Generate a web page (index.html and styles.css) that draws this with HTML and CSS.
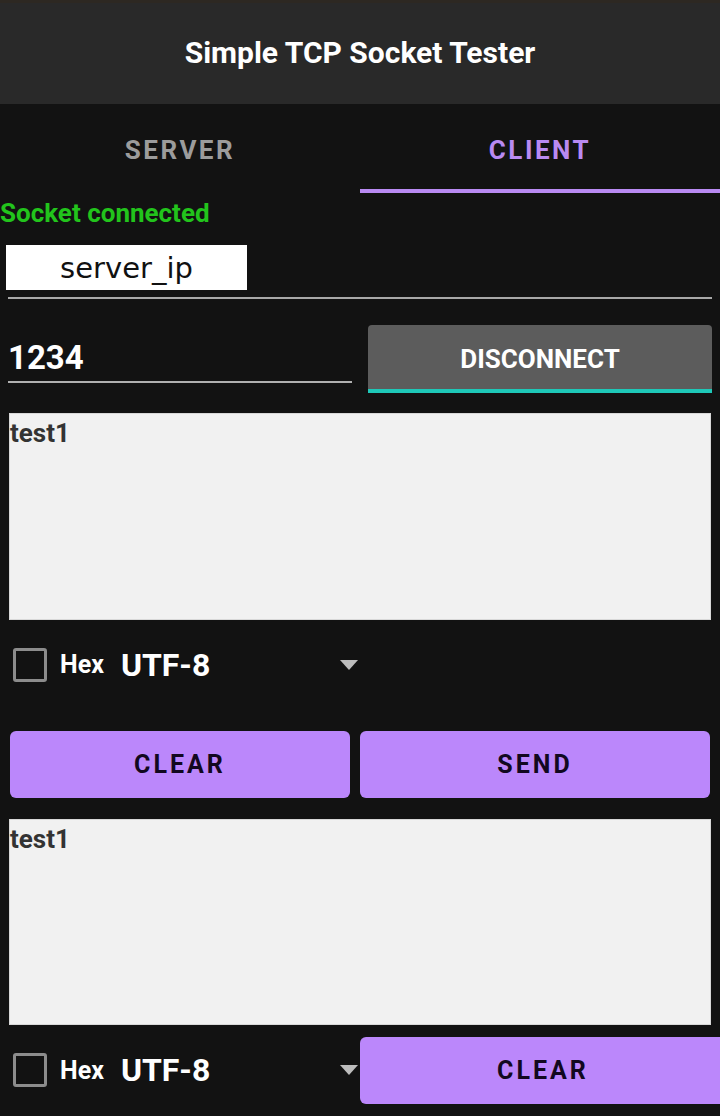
FILE: index.html
```html
<!DOCTYPE html>
<html>
<head>
<meta charset="utf-8">
<link rel="stylesheet" href="styles.css">
</head>
<body>
<div class="app">
  <header class="appbar"><h1 class="title">Simple TCP Socket Tester</h1></header>
  <nav class="tabs">
    <div class="tab">SERVER</div>
    <div class="tab active">CLIENT</div>
  </nav>
  <main class="content">
    <div class="status">Socket connected</div>
    <div class="ipbox">server_ip</div>
    <div class="divider"></div>
    <div class="port-row">
      <div class="port-field"><span class="port-value">1234</span></div>
      <div class="btn-disconnect">DISCONNECT</div>
    </div>
    <div class="textarea">test1</div>
    <div class="opt-row">
      <span class="checkbox"></span>
      <span class="hex">Hex</span>
      <span class="enc">UTF-8</span>
      <span class="caret"></span>
    </div>
    <div class="btn-row">
      <div class="btn btn-clear">CLEAR</div>
      <div class="btn btn-send">SEND</div>
    </div>
    <div class="textarea textarea-rx">test1</div>
    <div class="bottom-row">
      <div class="opt-row opt-bottom">
        <span class="checkbox"></span>
        <span class="hex">Hex</span>
        <span class="enc">UTF-8</span>
        <span class="caret"></span>
      </div>
      <div class="btn btn-clear2">CLEAR</div>
    </div>
  </main>
</div>
</body>
</html>
```
FILE: styles.css
```css
html, body {
  margin: 0;
  padding: 0;
  background: #121212;
  overflow: hidden;
}
body {
  width: 720px;
  height: 1116px;
  font-family: Roboto, "Liberation Sans", sans-serif;
}
.app {
  display: flex;
  flex-direction: column;
}
.appbar {
  height: 104px;
  background: #292929;
  border-top: 3px solid #2d2822;
  box-sizing: border-box;
  display: flex;
  align-items: center;
  justify-content: center;
}
.title {
  margin: 0;
  color: #ffffff;
  font-size: 30px;
  font-weight: 700;
  letter-spacing: 0;
  transform: translateY(-1px);
}
.tabs {
  height: 89px;
  display: grid;
  grid-template-columns: 1fr 1fr;
}
.tab {
  display: flex;
  align-items: center;
  justify-content: center;
  color: #9c9c9c;
  font-size: 26px;
  font-weight: 700;
  letter-spacing: 2.5px;
  padding-top: 3px;
  box-sizing: border-box;
}
.tab.active {
  color: #b98af2;
  border-bottom: 4px solid #b98af2;
  padding-top: 7px;
}
.content {
  display: flex;
  flex-direction: column;
}
.status {
  color: #22c41c;
  font-size: 26px;
  font-weight: 700;
  line-height: 30px;
  margin-top: 5px;
}
.ipbox {
  margin: 17px 0 0 6px;
  width: 241px;
  height: 45px;
  background: #ffffff;
  color: #111;
  font-family: "DejaVu Sans", sans-serif;
  font-size: 29px;
  display: flex;
  align-items: center;
  justify-content: center;
}
.divider {
  margin: 7px 8px 0;
  height: 2px;
  background: #a8a8a8;
}
.port-row {
  margin-top: 26px;
  padding: 0 8px;
  display: flex;
  gap: 16px;
  height: 68px;
}
.port-field {
  width: 344px;
  height: 58px;
  border-bottom: 2px solid #b0b0b0;
  display: flex;
  align-items: flex-end;
  box-sizing: border-box;
}
.port-value {
  color: #ffffff;
  font-size: 33px;
  font-weight: 700;
  line-height: 40px;
  margin-bottom: 3px;
}
.btn-disconnect {
  width: 344px;
  background: #5c5c5c;
  border-radius: 4px 4px 0 0;
  border-bottom: 4px solid #1ec8b8;
  box-sizing: border-box;
  color: #ffffff;
  font-size: 26px;
  font-weight: 700;
  display: flex;
  align-items: center;
  justify-content: center;
  padding-top: 4px;
}
.textarea {
  margin: 20px 9px 0;
  height: 207px;
  background: #f1f1f1;
  border: 1px solid #d8d8d8;
  box-sizing: border-box;
  color: #333333;
  font-size: 26px;
  font-weight: 700;
  line-height: 30px;
  padding-top: 4px;
}
.textarea-rx {
  margin-top: 21px;
  height: 206px;
}
.opt-row {
  width: 360px;
  height: 90px;
  display: flex;
  align-items: center;
  padding-left: 13px;
  padding-bottom: 1px;
  box-sizing: border-box;
}
.checkbox {
  width: 34px;
  height: 34px;
  border: 3px solid #8c8c8c;
  border-radius: 3px;
  box-sizing: border-box;
}
.hex {
  margin-left: 13px;
  color: #ffffff;
  font-size: 25px;
  font-weight: 700;
}
.enc {
  margin-left: 17px;
  color: #ffffff;
  font-size: 32px;
  font-weight: 700;
}
.caret {
  margin-left: auto;
  margin-right: 2px;
  width: 0;
  height: 0;
  border-left: 9px solid transparent;
  border-right: 9px solid transparent;
  border-top: 10px solid #bdbdbd;
}
.btn-row {
  margin-top: 21px;
  padding-left: 10px;
  display: grid;
  grid-template-columns: 340px 350px;
  gap: 10px;
  height: 67px;
}
.btn {
  background: #bb87fb;
  border-radius: 6px;
  color: #120820;
  font-size: 25px;
  font-weight: 700;
  letter-spacing: 3px;
  display: flex;
  align-items: center;
  justify-content: center;
}
.bottom-row {
  margin-top: 12px;
  display: flex;
  height: 67px;
}
.opt-bottom {
  flex-shrink: 0;
  height: 67px;
}
.btn-clear2 {
  width: 366px;
  flex-shrink: 0;
}
```
